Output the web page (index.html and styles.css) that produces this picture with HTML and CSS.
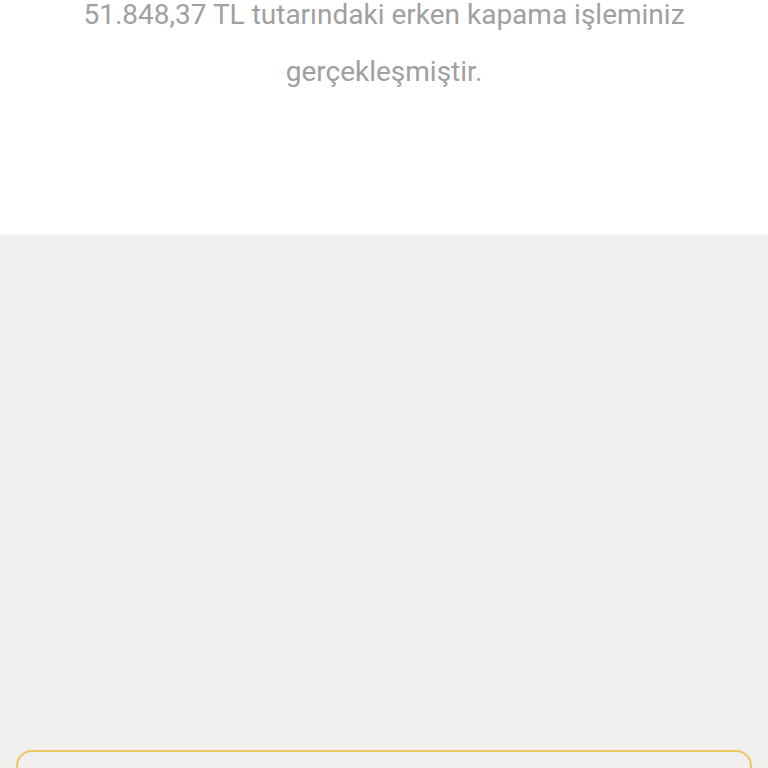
FILE: index.html
```html
<!doctype html>
<html>
  <head>
    <meta charset="utf-8">
    <meta name="viewport" content="width=device-width, initial-scale=1.0">
    <title>Erken kapama</title>
    <link rel="stylesheet" href="styles.css">
  </head>
  <body>
    <div class="result">
      <p class="result-text">51.848,37 TL tutarındaki erken kapama işleminiz gerçekleşmiştir.</p>
    </div>

    <div class="content">
      <div class="spacer"></div>
      <button class="outline-button" type="button"></button>
    </div>
  </body>
</html>
```

FILE: styles.css
```css
html, body {
  margin: 0;
  padding: 0;
}

body {
  font-family: Roboto, "Liberation Sans", sans-serif;
  background: #f1f0ee;
  height: 768px;
  overflow: hidden;
}

.result {
  background: #ffffff;
  height: 233px;
  border-bottom: 3px solid #f8f8f7;
  overflow: hidden;
}

.result-text {
  margin: -14px auto 0;
  width: 640px;
  text-align: center;
  color: #a0a0a0;
  font-size: 28px;
  line-height: 57px;
}

.content {
  display: flex;
  flex-direction: column;
  padding: 0 16px;
}

.spacer {
  height: 514px;
}

.outline-button {
  height: 56px;
  border: 2px solid #ecc75f;
  border-radius: 16px;
  background: transparent;
}
```
